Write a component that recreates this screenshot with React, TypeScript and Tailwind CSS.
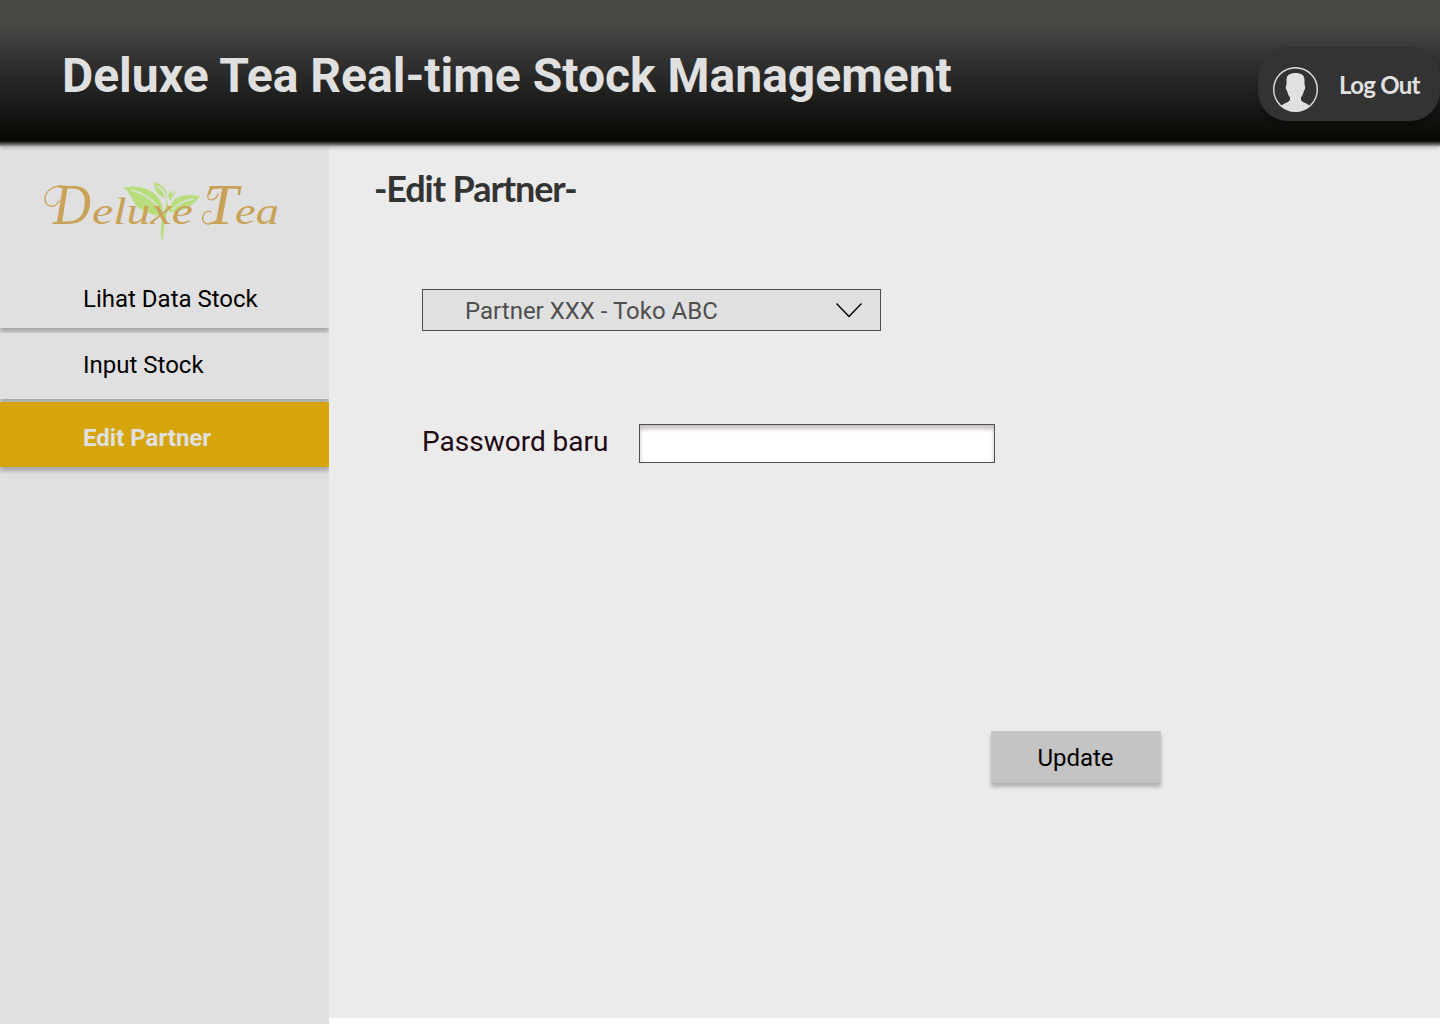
import React from "react";

function Logo() {
  return (
    <svg className="ml-10 mt-5 block h-[84px] w-[250px]" viewBox="40 166 250 84" role="img" aria-label="Deluxe Tea">
      <g fill="#b8dd7c">
        <path d="M123 188C135 184 150 188 157 196C163 203 164 211 162 216C151 215 140 211 135 204C131 198 130 192 123 188Z" />
        <path d="M154 182C162 184 168 190 167 198C158 197 154 190 154 182Z" />
        <path d="M200 196C192 195 180 194 174 200C170 205 169 209 169 212C183 212 192 207 200 196Z" />
        <path d="M168 196L170 190L172 194L177 190L173 196L170 201Z" />
        <path d="M166 198C169 204 168 213 165 220C164 228 164 234 162 242C160 233 161 223 163 215C165 209 167 204 166 198Z" />
      </g>
      <path d="M131 190C144 193 155 201 162 213M157 186Q164 190 166 197M193 199Q180 201 172 210" fill="none" stroke="#e0e0e0" strokeWidth="1.5" />
      <path
        d="M66 186.500C54 184 45 191 45 199C45 207 55 209 59 201M220 186.500C211 187 207 193 208 198C210 202 217 199 218 194M216 221C208 227 201 223 203 216C204 212 208 210 211 212"
        fill="none"
        stroke="#c9a258"
        strokeWidth="1.300"
        strokeLinecap="round"
      />
      <g fill="#c9a258" fontFamily="'Liberation Serif', serif" fontStyle="italic">
        <text x="53" y="224" fontSize="57" textLength="38" lengthAdjust="spacingAndGlyphs">D</text>
        <text x="92" y="224" fontSize="37" textLength="101" lengthAdjust="spacingAndGlyphs">eluxe</text>
        <text x="204" y="224" fontSize="57" textLength="34" lengthAdjust="spacingAndGlyphs">T</text>
        <text x="235" y="224" fontSize="37" textLength="44" lengthAdjust="spacingAndGlyphs">ea</text>
      </g>
    </svg>
  );
}

function Avatar() {
  return (
    <svg className="mt-5 ml-[15px] size-[45px] shrink-0" viewBox="0 0 45 45" fill="none">
      <clipPath id="avatar-circle">
        <circle cx="22.5" cy="22.5" r="22" />
      </clipPath>
      <path
        clipPath="url(#avatar-circle)"
        d="M13.500 13C13.500 8 17 6 22.500 6S31.500 8 31.500 13V18C32.500 18 32.500 23 31 23.500C30.500 27 29 29 28 30.500V33C30 36 34 36 37 39L35 45H10L8 39C11 36 15 36 17 33V30.500C16 29 14.500 27 14 23.500C12.500 23 12.500 18 13.500 18Z"
        fill="#e0e0e0"
      />
      <circle cx="22.5" cy="22.5" r="21.8" stroke="#e0e0e0" strokeWidth="1.4" />
    </svg>
  );
}

export default function App() {
  return (
    <div className="flex h-[1024px] w-[1440px] flex-col overflow-hidden bg-white font-[Roboto,sans-serif]">
      <header className="relative z-10 flex h-[146px] shrink-0 items-start justify-between bg-[linear-gradient(180deg,#474744_0px,#474744_27px,#434343_34px,#333333_57px,#0a0906_137px,#080704_141px,#999999_146px)] shadow-[0_2px_3px_rgba(0,0,0,0.22)]">
        <h1 className="ml-[62px] mt-[48px] whitespace-nowrap text-[48px] leading-[56px] font-bold text-[#e0e0e0]">
          Deluxe Tea Real-time Stock Management
        </h1>
        <button className="mt-[47px] flex h-[74px] w-[182px] rounded-[30px] bg-[#333] shadow-[0_4px_4px_rgba(0,0,0,0.25)]">
          <Avatar />
          <span className="ml-[21px] mt-[21px] whitespace-nowrap font-[Lato,sans-serif] text-[24px] leading-[34px] font-bold tracking-[-0.7px] text-[#e0e0e0]">
            Log Out
          </span>
        </button>
      </header>
      <div className="flex flex-1">
        <aside className="flex w-[329px] shrink-0 flex-col bg-[#e0e0e0]">
          <Logo />
          <nav className="mt-3 flex flex-col text-2xl leading-7 text-black">
            <a className="h-[66px] bg-[#e0e0e0] pl-[83px] pt-[23px] shadow-[0_4px_4px_rgba(0,0,0,0.25)]">Lihat Data Stock</a>
            <a className="mt-[5px] h-[66px] bg-[#e0e0e0] pl-[83px] pt-[18px] shadow-[0_4px_4px_rgba(0,0,0,0.25)]">Input Stock</a>
            <a className="mt-[3px] h-[65px] bg-[#d6a50b] pl-[83px] pt-[22px] font-bold text-[#e0e0e0] shadow-[0_4px_4px_rgba(0,0,0,0.25)]">Edit Partner</a>
          </nav>
        </aside>
        <main className="flex h-[872px] flex-1 flex-col items-start bg-[#ebebeb]">
          <h2 className="ml-[45px] mt-[18px] whitespace-nowrap font-[Lato,sans-serif] text-[36px] leading-[48px] font-bold tracking-[-1.1px] text-[#333]">
            -Edit Partner-
          </h2>
          <button className="ml-[93px] mt-[77px] flex h-[42px] w-[459px] items-center justify-between border border-[#4f4f4f] bg-[#e0e0e0] pl-[42px] pr-[18px] text-2xl text-[#4f4f4f]">
            <span className="pt-[2px]">Partner XXX - Toko ABC</span>
            <svg className="h-4 w-[26px]" viewBox="0 0 26 16" fill="none" stroke="#000" strokeWidth="1.5">
              <path d="M0.500 1.500L13 14.500L25.500 1.500" />
            </svg>
          </button>
          <label className="ml-[93px] mt-[93px] flex h-[39px] items-center text-[28px] leading-[33px] text-[#1f0812]">
            <span className="w-[217px] pb-[5px]">Password baru</span>
            <input type="password" className="h-[39px] w-[356px] border border-[#4f4f4f] bg-white shadow-[inset_0_4px_4px_rgba(31,8,18,0.25)] outline-none" />
          </label>
          <button className="ml-[662px] mt-[268px] h-[52px] w-[170px] bg-[#c4c4c4] pr-px pt-[2px] text-2xl text-black shadow-[0_4px_4px_rgba(0,0,0,0.25)]">
            Update
          </button>
        </main>
      </div>
    </div>
  );
}
